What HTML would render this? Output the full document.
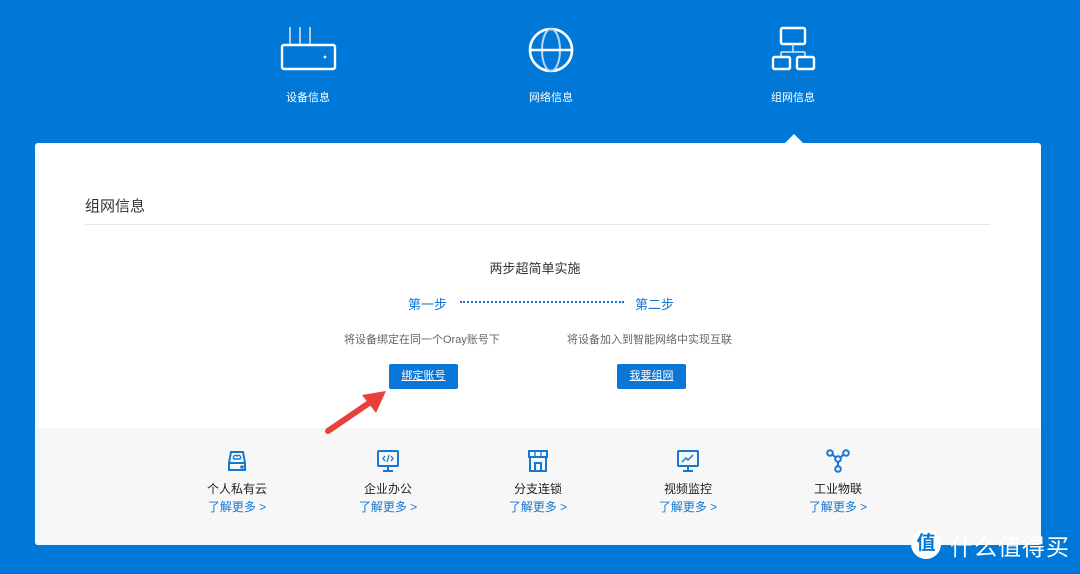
<!DOCTYPE html><html><head><meta charset="utf-8"><style>
*{margin:0;padding:0;box-sizing:border-box}
body{width:1080px;height:574px;background:#0078d7;font-family:"Liberation Sans","Noto Sans CJK SC",sans-serif;position:relative;overflow:hidden}
.a{position:absolute}
.lab{color:#fff;font-size:11px;width:100px;text-align:center}
.card{left:35px;top:143px;width:1006px;height:402px;background:#fff;border-radius:3px;overflow:hidden}
.grey{left:0;top:285px;width:1006px;height:117px;background:#f7f7f7}
.btn{background:#0a77d6;color:#fff;font-size:11px;text-decoration:underline;text-align:center;line-height:25px;border-radius:2px;width:69px;height:25px}
.it{width:120px;text-align:center}
.it svg{display:block;margin:0 auto}
.it .n{font-size:12px;color:#222;margin-top:8px;line-height:17px}
.it .l{font-size:12px;color:#1677d2;margin-top:1px;line-height:17px}
</style></head><body>
<svg class="a" style="left:278px;top:24px" width="62" height="52" fill="none" stroke="#fff" stroke-width="2.4">
<path d="M12 3V20M22 3V20M32 3V20" stroke="#bcd8f4" stroke-width="1.8"/>
<rect x="4" y="21" width="53" height="24" rx="2"/><circle cx="47" cy="33" r="1.4" fill="#fff" stroke="none"/></svg>
<div class="a lab" style="left:258px;top:89px">设备信息</div>
<svg class="a" style="left:526px;top:24px" width="52" height="52" fill="none" stroke="#fff" stroke-width="2.6">
<circle cx="25" cy="26" r="21"/><ellipse cx="25" cy="26" rx="9" ry="21" stroke="#bcd8f4" stroke-width="2"/><path d="M4 26H46"/></svg>
<div class="a lab" style="left:501px;top:89px">网络信息</div>
<svg class="a" style="left:770px;top:24px" width="48" height="50" fill="none" stroke="#fff" stroke-width="2.4">
<rect x="11" y="4" width="24" height="16" rx="1.5"/><path d="M23 20V28M11 28H35M11 28V32M35 28V32" stroke="#bcd8f4" stroke-width="1.8"/>
<rect x="3" y="33" width="17" height="12" rx="1.5"/><rect x="27" y="33" width="17" height="12" rx="1.5"/></svg>
<div class="a lab" style="left:743px;top:89px">组网信息</div>
<div class="a" style="left:785px;top:134px;width:0;height:0;border-left:9px solid transparent;border-right:9px solid transparent;border-bottom:9px solid #fff"></div>

<div class="a card">
<div class="a" style="left:50px;top:52px;font-size:15px;color:#333">组网信息</div>
<div class="a" style="left:50px;top:81px;width:905px;height:1px;background:#e6e6e6"></div>
<div class="a" style="left:400px;top:115px;width:200px;text-align:center;font-size:13px;color:#333">两步超简单实施</div>
<div class="a" style="left:373px;top:151px;font-size:13px;color:#1677d2">第一步</div>
<div class="a" style="left:425px;top:158px;width:164px;border-top:2px dotted #1677d2"></div>
<div class="a" style="left:600px;top:151px;font-size:13px;color:#1677d2">第二步</div>
<div class="a" style="left:309px;top:188px;font-size:11px;color:#666">将设备绑定在同一个Oray账号下</div>
<div class="a" style="left:532px;top:188px;font-size:11px;color:#666">将设备加入到智能网络中实现互联</div>
<div class="a btn" style="left:354px;top:221px">绑定账号</div>
<div class="a btn" style="left:582px;top:221px">我要组网</div>
<div class="a grey"></div>
</div>
<svg class="a" style="left:320px;top:385px" width="75" height="55"><path d="M8 46L52 16" stroke="#e8413c" stroke-width="6" stroke-linecap="round"/><path d="M66 6L42 10L56 28Z" fill="#e8413c"/></svg>

<div class="a it" style="left:177px;top:449px"><svg width="24" height="24" fill="none" stroke="#1677d2" stroke-width="2"><path d="M4 14L6 3H18L20 14V21H4Z M4 14H20"/><path d="M9 10a2 2 0 0 1 3-3a2 2 0 0 1 3 3Z" stroke-width="1.4"/><circle cx="17" cy="18" r=".8" fill="#1677d2"/></svg><div class="n">个人私有云</div><div class="l">了解更多 &gt;</div></div>
<div class="a it" style="left:328px;top:449px"><svg width="24" height="24" fill="none" stroke="#1677d2" stroke-width="2"><rect x="2" y="2" width="20" height="15" rx="1"/><path d="M12 17V21M7 22H17"/><path d="M9 7L7 9.5L9 12M15 7L17 9.5L15 12M13 6L11 13" stroke-width="1.3"/></svg><div class="n">企业办公</div><div class="l">了解更多 &gt;</div></div>
<div class="a it" style="left:478px;top:449px"><svg width="24" height="24" fill="none" stroke="#1677d2" stroke-width="2"><path d="M3 2H21V8H3Z M4 8V22H20V8 M9 22V14H15V22"/><path d="M9 2V8M15 2V8" stroke-width="1.3"/></svg><div class="n">分支连锁</div><div class="l">了解更多 &gt;</div></div>
<div class="a it" style="left:628px;top:449px"><svg width="24" height="24" fill="none" stroke="#1677d2" stroke-width="2"><rect x="2" y="2" width="20" height="15" rx="1"/><path d="M12 17V21M7 22H17"/><path d="M6 13L10 9L12 11L17 6" stroke-width="1.5"/></svg><div class="n">视频监控</div><div class="l">了解更多 &gt;</div></div>
<div class="a it" style="left:778px;top:449px"><svg width="26" height="24" fill="none" stroke="#1677d2" stroke-width="2"><circle cx="5" cy="4" r="2.8"/><circle cx="21" cy="4" r="2.8"/><circle cx="13" cy="10" r="2.8"/><circle cx="13" cy="20" r="2.8"/><path d="M7.5 5.5L10.5 8.5M18.5 5.5L15.5 8.5M13 13V17"/></svg><div class="n">工业物联</div><div class="l">了解更多 &gt;</div></div>

<div class="a" style="left:911px;top:529px;width:30px;height:30px;border-radius:50%;background:#fff;color:#0078d7;font-size:19px;font-weight:bold;text-align:center;line-height:30px">值</div>
<div class="a" style="left:950px;top:528px;font-size:23px;color:#fff;letter-spacing:1px">什么值得买</div>
</body></html>
